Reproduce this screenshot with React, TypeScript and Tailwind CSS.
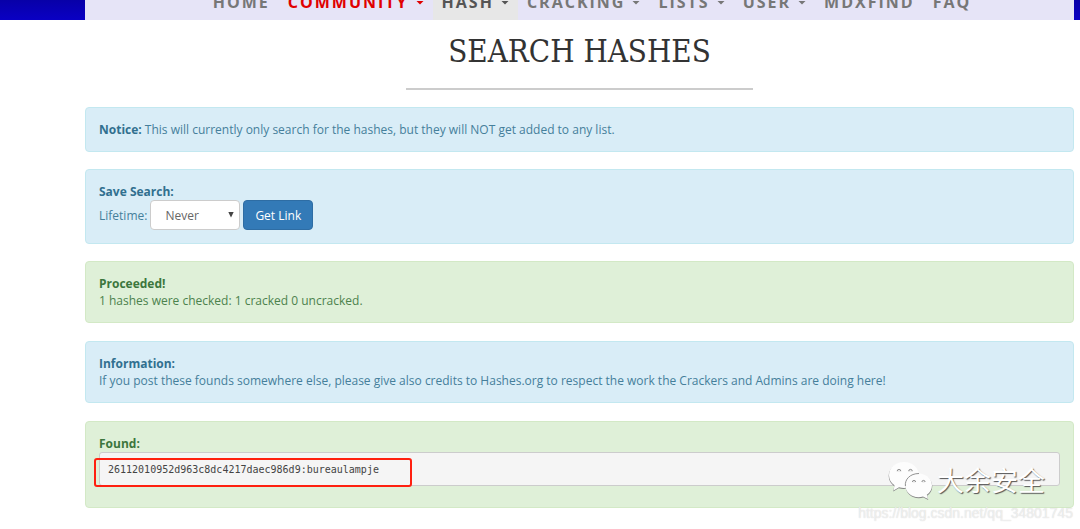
import type { ReactNode } from 'react';

type NavItem = { label: string; menu?: boolean; tone?: 'alert' | 'active' };

const NAV: NavItem[] = [
  { label: 'HOME' },
  { label: 'COMMUNITY', menu: true, tone: 'alert' },
  { label: 'HASH', menu: true, tone: 'active' },
  { label: 'CRACKING', menu: true },
  { label: 'LISTS', menu: true },
  { label: 'USER', menu: true },
  { label: 'MDXFIND' },
  { label: 'FAQ' },
];

function NavLink({ label, menu, tone }: NavItem) {
  const color =
    tone === 'alert' ? 'text-[#e00000]' : tone === 'active' ? 'bg-[#e7e7e7] text-[#555555]' : 'text-[#777777]';
  return (
    <li>
      <a href="#" className={`flex h-9 items-center px-[9px] ${color}`}>
        {label}
        {menu && (
          <svg className="ml-[7px] mt-[2px]" width="8" height="4" viewBox="0 0 8 4" aria-hidden="true">
            <path d="M0.5 0h7L4 3.500z" fill="currentColor" />
          </svg>
        )}
      </a>
    </li>
  );
}

function Alert({ tone, children }: { tone: 'info' | 'success'; children: ReactNode }) {
  const colors =
    tone === 'info'
      ? 'border-[#c3e8f0] bg-[#d9edf7] text-[#457f9b] [&_strong]:text-[#31708f]'
      : 'border-[#d3e9c6] bg-[#dff0d8] text-[#4c824d] [&_strong]:text-[#3c763d]';
  return <section className={`rounded border p-[13px] ${colors}`}>{children}</section>;
}

function ChatLogo() {
  return (
    <svg width="46" height="40" viewBox="0 0 46 40" aria-hidden="true">
      <g fill="#858585" transform="translate(-0.3 0.9)">
        <path d="M17 2C8.500 2 2 7.800 2 15.200c0 4.200 2 7.600 5.500 10.100L6.500 30.500l5.500-3.200c1.700.5 3.300.7 5 .7 8.500 0 15-5.700 15-12.800S25.500 2 17 2z" />
      </g>
      <path
        fill="#fdfdfd"
        d="M17 2C8.500 2 2 7.800 2 15.200c0 4.200 2 7.600 5.500 10.100L6.500 30.500l5.500-3.200c1.700.5 3.300.7 5 .7 8.500 0 15-5.700 15-12.800S25.500 2 17 2z"
      />
      <path
        fill="#858585"
        transform="translate(0.300 1)"
        d="M31.500 13.500c-7.300 0-13.200 5-13.200 11.700s5.900 12 13.200 12c1.600 0 3.100-.2 4.500-.7l5 2.500-1.200-4.200c3.200-2.200 5.200-5.500 5.200-9.600 0-6.700-6.200-11.700-13.500-11.700z"
      />
      <path
        fill="#fdfdfd"
        d="M31.500 13.500c-7.300 0-13.200 5-13.200 11.700s5.900 12 13.200 12c1.600 0 3.100-.2 4.500-.7l5 2.500-1.200-4.200c3.200-2.200 5.200-5.500 5.200-9.600 0-6.700-6.200-11.700-13.500-11.700z"
      />
      <path d="M18.400 26c-.8-6.500 4.600-12.500 13.600-12.500" fill="none" stroke="#858585" strokeWidth="0.9" />
      <g fill="#ededed" stroke="none">
        <circle cx="12" cy="10.500" r="1.800" />
        <circle cx="23.500" cy="10.500" r="1.800" />
        <circle cx="27" cy="21.500" r="1.600" />
        <circle cx="36.500" cy="21.500" r="1.600" />
      </g>
      <g fill="none" stroke="#858585" strokeWidth="0.9">
        <path d="M10.200 11.200a1.800 1.800 0 1 1 3.600 0M21.700 11.200a1.800 1.800 0 1 1 3.600 0M25.400 22a1.600 1.600 0 1 1 3.200 0M34.900 22a1.600 1.600 0 1 1 3.200 0" />
      </g>
    </svg>
  );
}

export default function App() {
  return (
    <div className="relative bg-white pb-[21px] font-['Open_Sans',sans-serif] text-[12px] leading-[17px]">
      <header className="flex h-5 items-end overflow-hidden bg-gradient-to-b from-[#0800a8] to-[#0a00c4] pl-[85px] pr-[6px]">
        <nav className="flex-1 bg-[#e6e4f7]" aria-label="Main">
          <ul className="flex justify-center pl-[25px] text-[16px] font-bold tracking-[2px]">
            {NAV.map((item) => (
              <NavLink key={item.label} {...item} />
            ))}
          </ul>
        </nav>
      </header>

      <main className="flex flex-col pl-[85px] pr-[6px]">
        <h1 className="pt-[12px] text-center font-['DejaVu_Serif_Condensed','DejaVu_Serif',serif] text-[31px] leading-[38px] text-[#333333]">
          SEARCH HASHES
        </h1>
        <hr className="mx-auto mt-[18px] w-[35%] border-0 border-t-2 border-[#cccccc]" />

        <div className="mt-[17px] flex flex-col gap-[17px]">
          <Alert tone="info">
            <p>
              <strong>Notice:</strong> This will currently only search for the hashes, but they will NOT get added to
              any list.
            </p>
          </Alert>

          <Alert tone="info">
            <strong className="block">Save Search:</strong>
            <form className="flex items-center gap-[3px]">
              <label htmlFor="lifetime">Lifetime:</label>
              <span className="relative">
                <select
                  id="lifetime"
                  className="block h-[30px] w-[90px] appearance-none rounded border border-[#cccccc] bg-white px-[14px] text-[12px] text-[#666666]"
                >
                  <option>Never</option>
                </select>
                <svg
                  className="pointer-events-none absolute right-[6px] top-[12px]"
                  width="6"
                  height="6"
                  viewBox="0 0 6 6"
                  aria-hidden="true"
                >
                  <path d="M0.300 0h5.400L3 5.500z" fill="#444444" />
                </svg>
              </span>
              <button
                type="button"
                className="h-[30px] rounded border border-[#2e6da4] bg-[#337ab7] px-[11px] text-[12px] text-white"
              >
                Get Link
              </button>
            </form>
          </Alert>
        </div>

        <div className="mt-[17px] flex flex-col gap-[18px]">
          <Alert tone="success">
            <strong className="block">Proceeded!</strong>
            <p>1 hashes were checked: 1 cracked 0 uncracked.</p>
          </Alert>

          <Alert tone="info">
            <strong className="block">Information:</strong>
            <p>
              If you post these founds somewhere else, please give also credits to Hashes.org to respect the work the
              Crackers and Admins are doing here!
            </p>
          </Alert>

          <Alert tone="success">
            <strong className="block">Found:</strong>
            <div className="relative mb-[8px]">
              <pre className="h-[34px] rounded-[3px] border border-[#cccccc] bg-[#f5f5f5] px-[8px] py-[8px] font-['DejaVu_Sans_Mono',monospace] text-[10px] leading-[17px] text-[#444444]">
                26112010952d963c8dc4217daec986d9:bureaulampje
              </pre>
              <div className="absolute -left-[5px] top-[6px] h-[29px] w-[318px] rounded-[3px] border-2 border-[#ff2010]" />
            </div>
          </Alert>
        </div>
      </main>

      <div className="pointer-events-none absolute bottom-[29px] right-[35px] flex items-center gap-[4px]">
        <ChatLogo />
        <span className="font-['Noto_Sans_CJK_SC',sans-serif] text-[27px] leading-[40px] text-white [text-shadow:1px_1px_1px_#555555]">
          大余安全
        </span>
      </div>
      <p className="pointer-events-none absolute bottom-[7px] right-[7px] font-['Liberation_Sans',sans-serif] text-[14px] text-white/60 [text-shadow:0_0_1px_#cccccc]">
        https://blog.csdn.net/qq_34801745
      </p>
    </div>
  );
}
